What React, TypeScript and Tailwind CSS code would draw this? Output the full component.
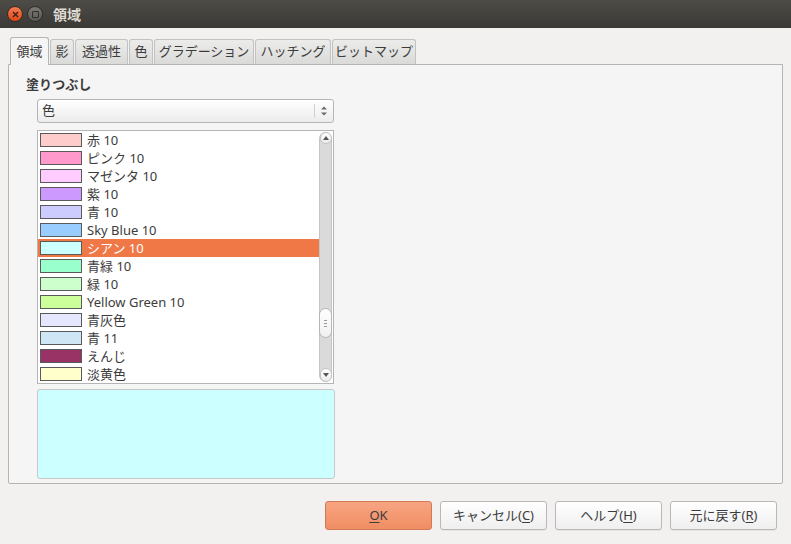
const FONT = { fontFamily: '"Noto Sans", "Noto Sans CJK JP", sans-serif' }

const TABS = [
  { label: '領域', w: 39 },
  { label: '影', w: 24 },
  { label: '透過性', w: 53 },
  { label: '色', w: 24 },
  { label: 'グラデーション', w: 100 },
  { label: 'ハッチング', w: 76 },
  { label: 'ビットマップ', w: 84 },
]

const COLORS = [
  { name: '赤 10', color: '#ffcccc' },
  { name: 'ピンク 10', color: '#ff99cc' },
  { name: 'マゼンタ 10', color: '#ffccff' },
  { name: '紫 10', color: '#cc99ff' },
  { name: '青 10', color: '#ccccff' },
  { name: 'Sky Blue 10', color: '#99ccff' },
  { name: 'シアン 10', color: '#ccffff' },
  { name: '青緑 10', color: '#99ffcc' },
  { name: '緑 10', color: '#ccffcc' },
  { name: 'Yellow Green 10', color: '#ccff99' },
  { name: '青灰色', color: '#e6e6ff' },
  { name: '青 11', color: '#cfe7f5' },
  { name: 'えんじ', color: '#993366' },
  { name: '淡黄色', color: '#ffffcc' },
]

function Btn({ pre, mn, post, primary }: { pre: string; mn: string; post: string; primary?: boolean }) {
  return (
    <button
      className={`w-[107px] h-[29px] rounded-[3px] border text-[13px] text-[#3c3c3c] ${
        primary
          ? 'border-[#d27a55] bg-gradient-to-b from-[#f7a582] to-[#f08d63]'
          : 'border-[#b8b8b8] bg-gradient-to-b from-white to-[#efefef] shadow-[0_1px_0_rgba(0,0,0,0.05)]'
      }`}
    >
      {pre}
      <span className="underline underline-offset-2">{mn}</span>
      {post}
    </button>
  )
}

export default function App() {
  return (
    <div className="w-[791px] h-[544px] bg-[#f2f1f0] flex flex-col text-[#3c3c3c] overflow-hidden" style={FONT}>
      {/* title bar */}
      <div className="h-[28px] shrink-0 bg-gradient-to-b from-[#4d4c47] to-[#3a3935] flex items-center pl-[7px]">
        <div className="w-[16px] h-[16px] rounded-full bg-gradient-to-b from-[#f47b4f] to-[#dd4814] border border-[#3a2a22] flex items-center justify-center">
          <svg width="7" height="7" viewBox="0 0 7 7">
            <path d="M1 1L6 6M6 1L1 6" stroke="#3b2015" strokeWidth="1.4" />
          </svg>
        </div>
        <div className="ml-[4px] w-[16px] h-[16px] rounded-full bg-gradient-to-b from-[#7b7a75] to-[#5a5954] border border-[#2e2d2a] flex items-center justify-center">
          <div className="w-[7px] h-[7px] border border-[#2e2d2a] rounded-[1px]" />
        </div>
        <span className="ml-[10px] text-[14px] font-bold text-[#dfdbd2]">領域</span>
      </div>

      <div className="flex flex-col px-[8px] pt-[9px]">
        {/* tabs */}
        <div className="flex items-end gap-[1px] pl-[2px] h-[27px] relative z-10">
          {TABS.map((t, i) =>
            i === 0 ? (
              <div
                key={t.label}
                style={{ width: t.w }}
                className="h-[28px] -mb-px bg-[#f5f5f5] border border-b-0 border-[#b5b5b5] rounded-t-[3px] flex items-center justify-center text-[13px]"
              >
                {t.label}
              </div>
            ) : (
              <div
                key={t.label}
                style={{ width: t.w }}
                className="h-[25px] bg-gradient-to-b from-[#ececeb] to-[#dadad9] border border-b-0 border-[#c2c2c2] rounded-t-[3px] flex items-center justify-center text-[13px]"
              >
                {t.label}
              </div>
            )
          )}
        </div>

        {/* panel */}
        <div className="h-[420px] bg-[#f5f5f5] border border-[#b5b5b5] rounded-b-[2px] pl-[17px] pt-[10px]">
          <div className="text-[13px] font-bold leading-[18px]">塗りつぶし</div>
          <div className="pl-[11px] pt-[6px] w-[314px]">
            {/* select */}
            <div className="h-[24px] w-[297px] rounded-[3px] border border-[#b5b5b5] bg-gradient-to-b from-white to-[#ececec] flex items-center pl-[4px] text-[13px]">
              <span className="flex-1">色</span>
              <div className="w-px h-[14px] bg-[#d0d0d0]" />
              <svg width="14" height="14" viewBox="0 0 14 14" className="mx-[2px]">
                <path d="M4 5.5L7 2.5L10 5.5Z" fill="#6a6a6a" />
                <path d="M4 8.5L7 11.5L10 8.5Z" fill="#6a6a6a" />
              </svg>
            </div>

            {/* list */}
            <div className="mt-[7px] h-[254px] w-[297px] border border-[#b5b5b5] bg-white flex">
              <div className="flex-1 overflow-hidden">
                {COLORS.map((c, i) => (
                  <div
                    key={c.name}
                    className={`h-[18px] flex items-center text-[13px] leading-[18px] ${i === 6 ? 'bg-[#f07746] text-white' : ''}`}
                  >
                    <div className="ml-[2px] w-[42px] h-[14px] border border-[#5a5a5a]" style={{ background: c.color }} />
                    <span className="ml-[5px]">{c.name}</span>
                  </div>
                ))}
              </div>
              {/* scrollbar */}
              <div className="w-[14px] py-[1px] pr-[1px] flex flex-col">
                <div className="flex-1 rounded-full bg-[#dadada] border border-[#c4c4c4] flex flex-col items-center relative">
                  <div className="w-[12px] h-[12px] rounded-full bg-gradient-to-b from-white to-[#ececec] border border-[#c4c4c4] -mt-px flex items-center justify-center">
                    <svg width="6" height="4" viewBox="0 0 6 4"><path d="M0 4L3 0L6 4Z" fill="#555" /></svg>
                  </div>
                  <div className="absolute top-[175px] left-[-1px] w-[13px] h-[30px] rounded-full bg-gradient-to-b from-white to-[#f0f0f0] border border-[#b5b5b5] flex flex-col items-center justify-center gap-[2px]">
                    <div className="w-[3px] h-px bg-[#9a9a9a]" />
                    <div className="w-[3px] h-px bg-[#9a9a9a]" />
                    <div className="w-[3px] h-px bg-[#9a9a9a]" />
                  </div>
                  <div className="mt-auto w-[12px] h-[14px] rounded-full bg-gradient-to-b from-white to-[#ececec] border border-[#c4c4c4] -mb-px flex items-center justify-center">
                    <svg width="6" height="4" viewBox="0 0 6 4"><path d="M0 0L3 4L6 0Z" fill="#555" /></svg>
                  </div>
                </div>
              </div>
            </div>

            {/* preview */}
            <div className="mt-[5px] h-[90px] w-[298px] rounded-[3px] border border-[#c8c8c8] bg-[#ccffff]" />
          </div>
        </div>
      </div>

      {/* buttons */}
      <div className="flex justify-end gap-[8px] pr-[14px] pt-[17px]">
        <Btn pre="" mn="O" post="K" primary />
        <Btn pre="キャンセル(" mn="C" post=")" />
        <Btn pre="ヘルプ(" mn="H" post=")" />
        <Btn pre="元に戻す(" mn="R" post=")" />
      </div>
    </div>
  )
}
